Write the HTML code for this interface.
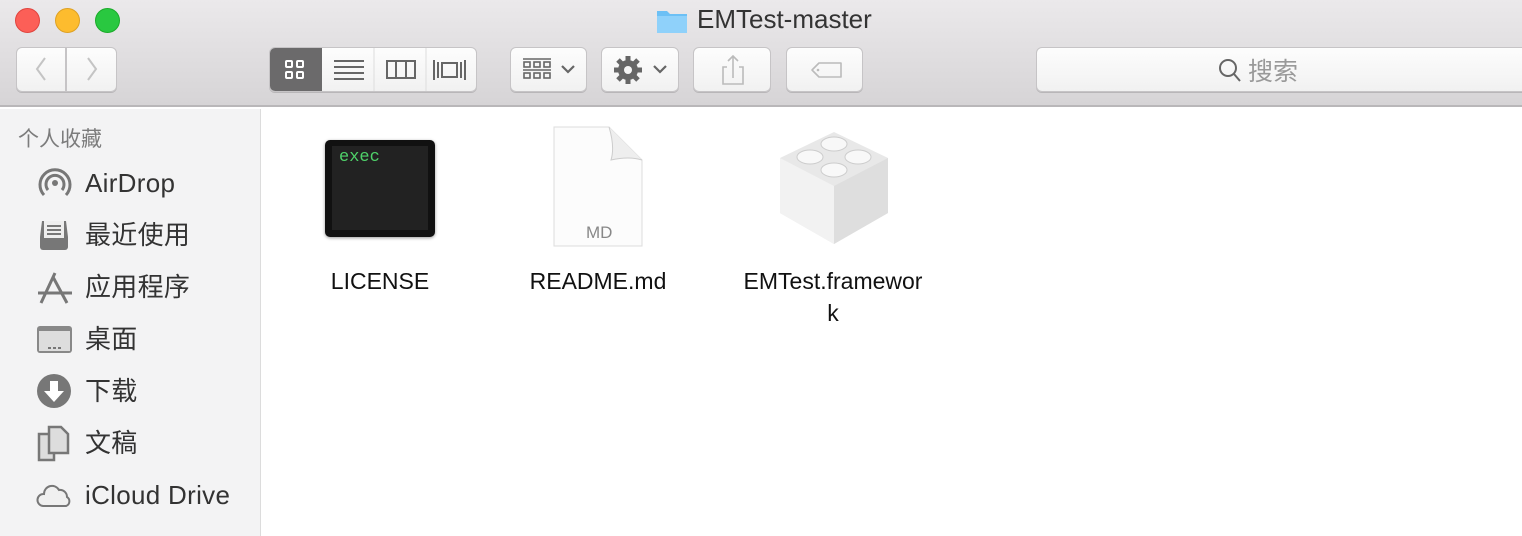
<!DOCTYPE html>
<html><head><meta charset="utf-8"><style>
*{margin:0;padding:0;box-sizing:border-box}
body{width:1522px;height:536px;overflow:hidden;background:#fff;font-family:"Liberation Sans","Noto Sans CJK SC",sans-serif;position:relative}
.tb{position:absolute;left:0;top:0;width:1522px;height:107px;background:linear-gradient(#ebe9eb,#d6d4d6);border-bottom:2px solid #b9b7b9}
.dot{position:absolute;top:8px;width:25px;height:25px;border-radius:50%}
.btn{position:absolute;top:47px;height:45px;background:linear-gradient(#fdfdfd,#f1f1f1);border:1px solid #c6c4c6;border-radius:6px;box-shadow:0 1px 0 #b8b6b8}
.sb{position:absolute;left:0;top:109px;width:261px;height:427px;background:#f3f3f4;border-right:1px solid #dcdcdc}
.it{position:absolute;left:85px;font-size:26px;color:#333;line-height:30px;letter-spacing:0.3px}
.ic{position:absolute;left:36px}
.lbl{position:absolute;font-size:23px;color:#111;text-align:center;line-height:32px}
</style></head><body>
<div class="tb">
 <div class="dot" style="left:15px;background:#fc5f57;border:1px solid #e0443e"></div>
 <div class="dot" style="left:55px;background:#fdbc2e;border:1px solid #dea123"></div>
 <div class="dot" style="left:95px;background:#29c840;border:1px solid #1aab29"></div>
 <svg style="position:absolute;left:656px;top:8px" width="32" height="26"><path d="M1 3h10l3 3h17v19H1z" fill="#6cc0f5"/><rect x="1" y="8" width="30" height="17" fill="#8fd1fa"/></svg>
 <div style="position:absolute;left:697px;top:4px;font-size:26px;color:#333">EMTest-master</div>
 <div class="btn" style="left:16px;width:50px;border-radius:6px 0 0 6px"><svg width="48" height="43"><path d="M28 10l-8 11 8 11" stroke="#c4c4c4" stroke-width="2" fill="none"/></svg></div>
 <div class="btn" style="left:66px;width:51px;border-radius:0 6px 6px 0"><svg width="48" height="43"><path d="M21 10l8 11-8 11" stroke="#c4c4c4" stroke-width="2" fill="none"/></svg></div>
 <div class="btn" style="left:269px;width:208px;overflow:hidden">
  <div style="position:absolute;left:0;top:0;width:52px;height:45px;background:#6b6a6b"></div>
  <svg style="position:absolute;left:0;top:0" width="208" height="45">
   <g fill="none" stroke="#fff" stroke-width="2"><rect x="16" y="13" width="6" height="6" rx="1"/><rect x="27" y="13" width="6" height="6" rx="1"/><rect x="16" y="24" width="6" height="6" rx="1"/><rect x="27" y="24" width="6" height="6" rx="1"/></g>
   <g stroke="#666" stroke-width="2"><path d="M64 13h30M64 19h30M64 25h30M64 31h30"/></g>
   <line x1="104" y1="0" x2="104" y2="45" stroke="#ddd"/><line x1="156" y1="0" x2="156" y2="45" stroke="#ddd"/>
   <g fill="none" stroke="#666" stroke-width="2"><rect x="117" y="13" width="28" height="17"/><path d="M126 13v17M136 13v17"/><rect x="172" y="15" width="15" height="14"/><path d="M164 12v20M168 14v16M191 14v16M195 12v20"/></g>
  </svg></div>
 <div class="btn" style="left:510px;width:77px"><svg width="77" height="45"><g fill="none" stroke="#666" stroke-width="1.6"><path d="M12 11h28M12 22h28"/><rect x="13" y="14" width="6" height="5"/><rect x="23" y="14" width="6" height="5"/><rect x="33" y="14" width="6" height="5"/><rect x="13" y="25" width="6" height="5"/><rect x="23" y="25" width="6" height="5"/><rect x="33" y="25" width="6" height="5"/><path d="M51 18l6 6 6-6" stroke-width="2.2"/></g></svg></div>
 <div class="btn" style="left:601px;width:78px"><svg width="78" height="45"><g transform="translate(26 22)"><circle r="10" fill="#666"/><g stroke="#666" stroke-width="5"><path d="M0-14V14M-14 0H14M-10-10L10 10M-10 10L10-10"/></g><circle r="4" fill="#f5f5f5"/></g><path d="M52 18l6 6 6-6" stroke="#666" stroke-width="2.2" fill="none"/></svg></div>
 <div class="btn" style="left:693px;width:78px"><svg width="78" height="45"><g fill="none" stroke="#bbb" stroke-width="1.6"><path d="M33 19h-4v17h20V19h-4M39 30V8M34 13l5-5 5 5"/></g></svg></div>
 <div class="btn" style="left:786px;width:77px"><svg width="77" height="45"><path d="M25 22l7-7h22v14H32z" fill="none" stroke="#bbb" stroke-width="1.6" stroke-linejoin="round"/><circle cx="31" cy="22" r="1.3" fill="#bbb"/></svg></div>
 <div class="btn" style="left:1036px;width:500px"><svg style="position:absolute;left:178px;top:8px" width="30" height="30"><circle cx="13" cy="12" r="8" fill="none" stroke="#666" stroke-width="2"/><path d="M19 18l6 7" stroke="#666" stroke-width="2"/></svg><span style="position:absolute;left:211px;top:4px;font-size:25px;color:#999">搜索</span></div>
</div>
<div class="sb">
 <div style="position:absolute;left:18px;top:14px;font-size:21px;color:#7c7c7c">个人收藏</div>
 <svg class="ic" style="top:55px" width="38" height="38"><g fill="none" stroke="#777" stroke-width="3"><path d="M8 31A15 15 0 1 1 30 31"/><path d="M12 26A9 9 0 1 1 26 26"/></g><circle cx="19" cy="19" r="3" fill="#777"/></svg>
 <div class="it" style="top:59px">AirDrop</div>
 <svg class="ic" style="top:108px" width="38" height="38"><path d="M4 20L6 4h24l2 16v10a3 3 0 0 1-3 3H7a3 3 0 0 1-3-3z" fill="#777"/><rect x="8" y="4" width="20" height="17" fill="#eee"/><path d="M11 9h14M11 13h14M11 17h14" stroke="#777" stroke-width="2"/></svg>
 <div class="it" style="top:111px">最近使用</div>
 <svg class="ic" style="top:160px" width="38" height="38"><g stroke="#777" stroke-width="3" fill="none"><path d="M19 4L5 34M17 8l14 26M2 24h34"/></g></svg>
 <div class="it" style="top:163px">应用程序</div>
 <svg class="ic" style="top:212px" width="38" height="38"><rect x="1" y="5" width="35" height="27" rx="3" fill="#888"/><rect x="3" y="10" width="31" height="20" fill="#ddd"/><path d="M12 27h3M17 27h3M22 27h3" stroke="#777" stroke-width="2"/></svg>
 <div class="it" style="top:215px">桌面</div>
 <svg class="ic" style="top:264px" width="38" height="38"><circle cx="18" cy="18" r="17" fill="#777"/><path d="M14 8h8v10h6L18 29 8 18h6z" fill="#fff"/></svg>
 <div class="it" style="top:267px">下载</div>
 <svg class="ic" style="top:316px" width="38" height="38"><g fill="#ddd" stroke="#777" stroke-width="2.5"><path d="M3 9h15v26H3z"/><path d="M13 2h12l7 7v19H13z"/></g></svg>
 <div class="it" style="top:319px">文稿</div>
 <svg class="ic" style="top:368px" width="38" height="38"><path d="M7 29a6 6 0 0 1 1-12 8 8 0 0 1 15-4 7 7 0 0 1 8 7 5 5 0 0 1-1 9z" fill="#f0f0f0" stroke="#777" stroke-width="2"/></svg>
 <div class="it" style="top:371px">iCloud Drive</div>
</div>
<div style="position:absolute;left:325px;top:140px;width:110px;height:97px;background:#111;border-radius:5px;box-shadow:0 1px 3px rgba(0,0,0,.4)"><div style="position:absolute;left:7px;top:6px;right:7px;bottom:7px;background:#222"></div><span style="position:absolute;left:14px;top:8px;font-family:'Liberation Mono',monospace;font-size:17px;color:#4fd26a">exec</span></div>
<svg style="position:absolute;left:550px;top:124px" width="100" height="126"><path d="M4 3h55l33 33v86H4z" fill="#fcfcfc" stroke="#ddd"/><path d="M59 3q6 20 2 33q18-4 31 0" fill="#eee" stroke="#ccc"/><text x="36" y="114" font-family="Liberation Sans" font-size="17" fill="#888">MD</text></svg>
<svg style="position:absolute;left:776px;top:128px" width="116" height="120"><path d="M4 30L58 4l54 26v55L58 116 4 85z" fill="#e8e8e8"/><path d="M58 58v58L4 85V30z" fill="#f2f2f2"/><path d="M58 58v58l54-31V30z" fill="#dedede"/><g fill="#f8f8f8" stroke="#ccc"><ellipse cx="58" cy="16" rx="13" ry="7"/><ellipse cx="34" cy="29" rx="13" ry="7"/><ellipse cx="82" cy="29" rx="13" ry="7"/><ellipse cx="58" cy="42" rx="13" ry="7"/></g></svg>
<div class="lbl" style="left:300px;width:160px;top:265px">LICENSE</div>
<div class="lbl" style="left:518px;width:160px;top:265px">README.md</div>
<div class="lbl" style="left:718px;width:230px;top:265px">EMTest.framewor<br>k</div>
</body></html>
